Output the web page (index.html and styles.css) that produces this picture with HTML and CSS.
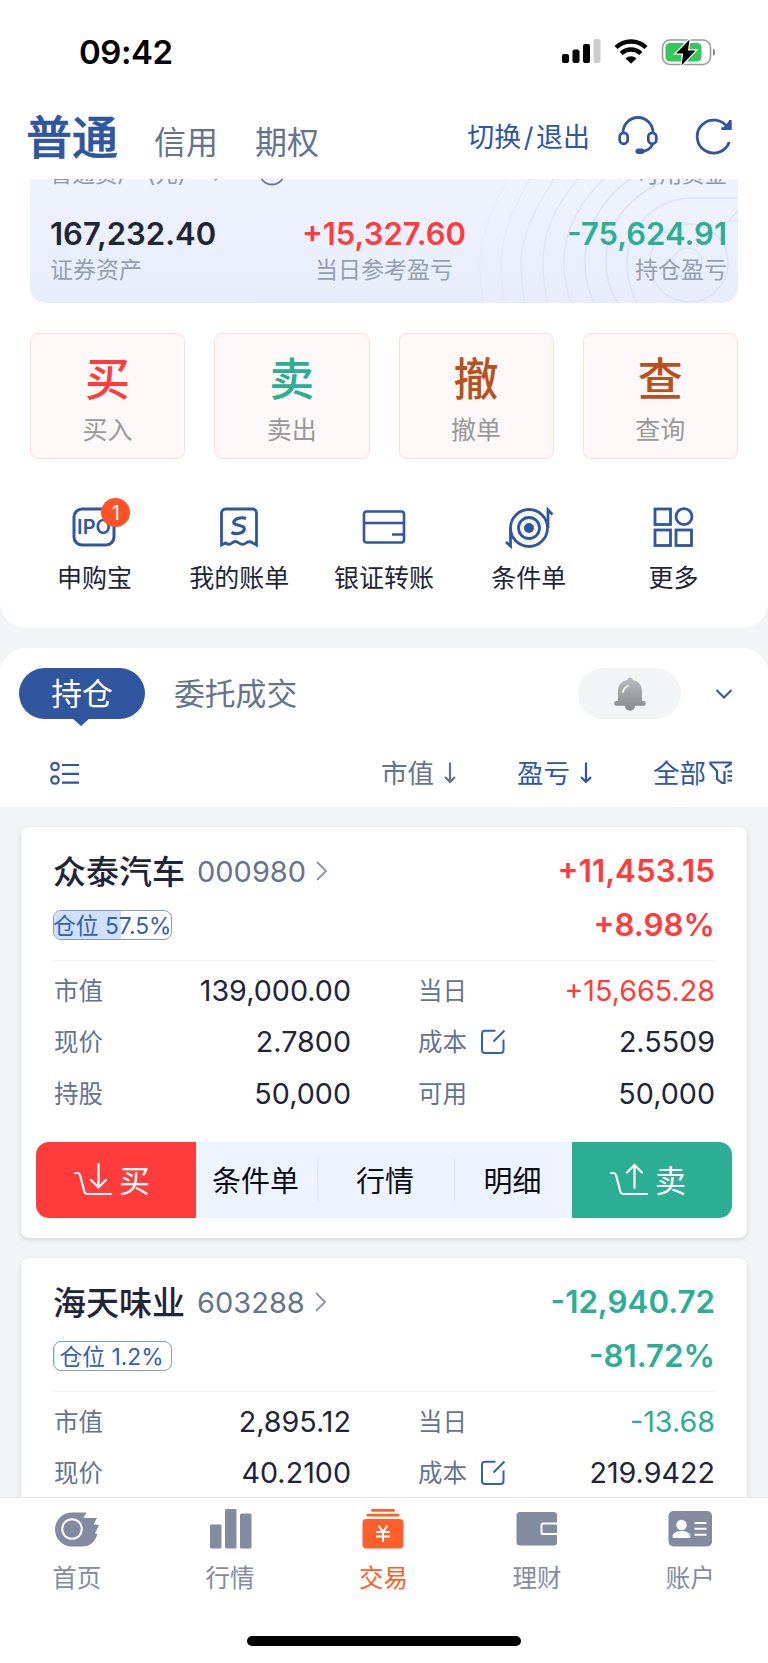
FILE: index.html
```html
<!DOCTYPE html>
<html lang="zh-CN">
<head>
    <meta charset="UTF-8">
    <meta name="viewport" content="width=device-width, initial-scale=1.0">
    <title>交易</title>
    <link rel="stylesheet" href="styles.css">
</head>
<body>
    <div class="screen">
        <div class="status-bar">
            <span class="time">09:42</span>
            <div class="status-icons">
                <svg width="40" height="26" viewBox="0 0 40 26">
                    <rect x="1" y="15" width="7" height="9" rx="2"/>
                    <rect x="11.5" y="10.500" width="7" height="13.500" rx="2"/>
                    <rect x="22" y="5" width="7" height="19" rx="2"/>
                    <rect x="32.500" y="0" width="7" height="24" rx="2" fill="#ccc"/>
                </svg>
                <svg width="34" height="26" viewBox="0 0 34 26" fill="none" stroke="#000" stroke-width="4.500">
                    <path d="M2 8.500a21.500 21.500 0 0 1 30 0"/>
                    <path d="M7.200 14.500a14 14 0 0 1 19.600 0"/>
                    <path d="M11.500 19.500a8 8 0 0 1 11 0L17 24.800z" fill="#000" stroke="none"/>
                </svg>
                <svg width="56" height="30" viewBox="0 0 56 30">
                    <rect x="1.500" y="3" width="48" height="24.500" rx="7.500" fill="#fff" stroke="#999" stroke-width="1.600"/>
                    <rect x="4.500" y="6" width="36" height="18.500" rx="4.500" fill="#34c759"/>
                    <path d="M52 11.500c3 1.500 3 6 0 7.500z" fill="#888"/>
                    <path d="M28.500 2.500L15 16.500h7.200L20.500 28.500 34.500 13.500h-7.500z" fill="#000" stroke="#fff" stroke-width="2.400" paint-order="stroke"/>
                </svg>
            </div>
        </div>

        <div class="header">
            <div class="account-tabs">
                <span class="account-tab active">普通</span>
                <span class="account-tab">信用</span>
                <span class="account-tab">期权</span>
            </div>
            <div class="header-actions">
                <span class="switch">切换<i>/</i>退出</span>
                <svg class="headset" width="40" height="40" viewBox="0 0 40 40" fill="none" stroke="#2f569f" stroke-width="2.800">
                    <path d="M5 17.500v-1a15 15 0 0 1 30 0v1"/>
                    <rect x="1.700" y="16.800" width="8" height="11" rx="4"/>
                    <rect x="30.300" y="16.800" width="8" height="11" rx="4"/>
                    <path d="M35 27c-1.500 5-6 8.500-12 8.500"/>
                    <rect x="17.500" y="32.500" width="9" height="5.500" rx="2.700" fill="#2f569f" stroke="none"/>
                </svg>
                <svg width="40" height="40" viewBox="0 0 40 40" fill="none" stroke="#2f569f" stroke-width="2.800">
                    <path d="M35.300 26a16.500 16.500 0 1 1-1.500-14"/>
                    <path d="M36.300 4v8.700h-9"/>
                    <path d="M35 5v7h-6z" fill="#2f569f" stroke="none"/>
                </svg>
            </div>
        </div>

        <div class="assets">
            <svg class="assets-pattern" width="280" height="124" viewBox="0 0 280 124" fill="none" stroke="#d9e3f8" stroke-width="1.500">
                <path d="M280 19H231a65 65 0 0 0-62 65q0 23 10 40"/>
                <path d="M202 4q-54 26-54 80q0 22 12 40"/>
                <path d="M172 0q-45 33-45 84q0 21 9 40"/>
                <path d="M146 0q-40 38-40 84q0 20 7 40" opacity=".9"/>
                <path d="M120 0q-35 40-35 84q0 20 5 40" opacity=".8"/>
                <path d="M96 0q-33 50-33 84q0 20 4 40" opacity=".7"/>
                <path d="M72 0q-29 50-29 84q0 20 3 40" opacity=".45"/>
                <path d="M50 0Q22 50 22 84q0 20 3 40" opacity=".3"/>
                <circle cx="231" cy="84" r="39"/>
                <circle cx="229" cy="84" r="15"/>
                <path d="M280 31l-9 11h9"/>
            </svg>
            <div class="assets-top">
                <span>普通资产<em>(元)</em><b>›</b></span>
                <svg width="28" height="28" viewBox="0 0 28 28"><circle cx="14" cy="14" r="12.500" fill="none" stroke="#6b7894" stroke-width="1.800"/></svg>
                <span class="push">可用资金</span>
            </div>
            <div class="assets-row">
                <div>
                    <div class="assets-value">167,232.40</div>
                    <div class="assets-label">证券资产</div>
                </div>
                <div class="center">
                    <div class="assets-value red">+15,327.60</div>
                    <div class="assets-label">当日参考盈亏</div>
                </div>
                <div class="right">
                    <div class="assets-value green">-75,624.91</div>
                    <div class="assets-label">持仓盈亏</div>
                </div>
            </div>
        </div>

        <div class="trade-grid">
            <div class="trade-card"><strong class="red">买</strong><span>买入</span></div>
            <div class="trade-card"><strong class="green">卖</strong><span>卖出</span></div>
            <div class="trade-card"><strong class="brown">撤</strong><span>撤单</span></div>
            <div class="trade-card"><strong class="brown">查</strong><span>查询</span></div>
        </div>

        <div class="shortcuts">
            <div class="shortcut">
                <div class="icon-wrap">
                    <svg width="48" height="44" viewBox="0 0 48 44">
                        <rect x="4" y="4" width="40" height="36" rx="8" fill="none" stroke="#2f569f" stroke-width="3"/>
                        <text x="24" y="29" text-anchor="middle" class="ipo">IPO</text>
                    </svg>
                    <span class="badge">1</span>
                </div>
                <span>申购宝</span>
            </div>
            <div class="shortcut">
                <svg width="48" height="44" viewBox="0 0 48 44" fill="none" stroke="#2f569f" stroke-width="2.800">
                    <path d="M6.500 40V8a4 4 0 0 1 4-4h27a4 4 0 0 1 4 4v32l-3.500-2q-4-2.500-7 0-3.500 2.800-7 0-4-3-7 0-3 2.500-6.500 0z"/>
                    <path d="M31 13.500c-5-2-12.500.5-12.200 4.200.3 3.500 11 1.600 10.500 6.300-.4 4.200-8.300 6.200-12.800 3.300" stroke-width="3.200"/>
                </svg>
                <span>我的账单</span>
            </div>
            <div class="shortcut">
                <svg width="48" height="44" viewBox="0 0 48 44" fill="none" stroke="#2f569f" stroke-width="2.600">
                    <rect x="4" y="6.500" width="40" height="31" rx="2.500"/>
                    <path d="M4 18h40M32 29.500h12"/>
                </svg>
                <span>银证转账</span>
            </div>
            <div class="shortcut">
                <svg width="48" height="44" viewBox="0 0 48 44" fill="none" stroke="#2f569f" stroke-width="2.800">
                    <circle cx="24" cy="23" r="18.500"/>
                    <circle cx="24" cy="23" r="10.500"/>
                    <circle cx="24" cy="23" r="5" fill="#2f569f" stroke="none"/>
                    <path d="M43 23V5l4.500 4.500M5.500 23v18L1 37"/>
                </svg>
                <span>条件单</span>
            </div>
            <div class="shortcut">
                <svg width="48" height="44" viewBox="0 0 48 44" fill="none" stroke="#2f569f" stroke-width="2.800">
                    <rect x="5" y="4" width="15.500" height="15.500"/>
                    <circle cx="34" cy="11.700" r="8"/>
                    <rect x="5" y="25" width="15.500" height="15.500"/>
                    <rect x="26" y="25" width="15.500" height="15.500"/>
                </svg>
                <span>更多</span>
            </div>
        </div>

        <div class="holdings-head">
            <div class="tabs">
                <span class="tab active">持仓</span>
                <span class="tab">委托成交</span>
                <div class="bell">
                    <svg width="36" height="36" viewBox="0 0 36 36">
                        <defs>
                            <linearGradient id="bellFill" x1="0" y1="0" x2="0" y2="1">
                                <stop offset="0" stop-color="#b9bbbe"/>
                                <stop offset="1" stop-color="#86888c"/>
                            </linearGradient>
                        </defs>
                        <path d="M18 1.500a2.500 2.500 0 0 1 2.500 2.600C26.500 5 30 9.500 30 15v10h1.500a2.300 2.300 0 0 1 0 4.800H23a5 5 0 0 1-10 0H4.500a2.300 2.300 0 0 1 0-4.800H6V15C6 9.500 9.500 5 15.500 4.100A2.500 2.500 0 0 1 18 1.500z" fill="url(#bellFill)"/>
                        <path d="M11 16q1-4.500 5-6" fill="none" stroke="#fffbe8" stroke-width="1.800" stroke-linecap="round"/>
                    </svg>
                </div>
                <svg class="chevron-down" width="18" height="12" viewBox="0 0 18 12" fill="none" stroke="#2f569f" stroke-width="2"><path d="M1.500 2L9 9.500 16.500 2"/></svg>
            </div>
            <div class="filters">
                <svg class="list-icon" width="30" height="26" viewBox="0 0 30 26" fill="none" stroke="#2f569f" stroke-width="2.200">
                    <circle cx="5" cy="6.500" r="3.700"/>
                    <circle cx="5" cy="20" r="3.700"/>
                    <path d="M12 5h17M12 13.800h17M12 22.600h17"/>
                </svg>
                <span class="filter muted"><span>市值</span>
                    <svg width="12" height="24" viewBox="0 0 12 24"><path d="M6 1.500v19.500M1 16l5 5 5-5"/></svg>
                </span>
                <span class="filter"><span>盈亏</span>
                    <svg width="12" height="24" viewBox="0 0 12 24"><path d="M6 1.500v19.500M1 16l5 5 5-5"/></svg>
                </span>
                <span class="filter all"><span>全部</span>
                    <svg width="24" height="24" viewBox="0 0 24 24"><path d="M16 6.500L21.800 3V1.500H1.500V3l6.500 7v8l5 4h2.500V10M18.500 10.500H23M18.500 15H23M18.500 19.500H23"/></svg>
                </span>
            </div>
        </div>

        <div class="holdings">
            <div class="stock">
                <div class="stock-title">
                    <span class="name">众泰汽车</span>
                    <span class="code">000980</span>
                    <svg width="14" height="22" viewBox="0 0 14 22"><path d="M2 2l9 9-9 9" fill="none" stroke="#8a94a8" stroke-width="1.800"/></svg>
                    <span class="profit red">+11,453.15</span>
                </div>
                <div class="stock-sub">
                    <span class="position"><i style="width: 57.5%"></i><span>仓位 57.5%</span></span>
                    <span class="profit red">+8.98%</span>
                </div>
                <div class="stats">
                    <div class="stat"><label>市值</label><span>139,000.00</span></div>
                    <div class="stat"><label>当日</label><span class="red">+15,665.28</span></div>
                    <div class="stat"><label>现价</label><span>2.7800</span></div>
                    <div class="stat"><label>成本</label>
                        <svg width="26" height="26" viewBox="0 0 26 26"><path d="M15.500 1.800H5a3 3 0 0 0-3 3V21a3 3 0 0 0 3 3h15.500a3 3 0 0 0 3-3V10.500M13.500 12.500L24.500 1.500"/></svg>
                        <span>2.5509</span>
                    </div>
                    <div class="stat"><label>持股</label><span>50,000</span></div>
                    <div class="stat"><label>可用</label><span>50,000</span></div>
                </div>
                <div class="stock-actions">
                    <div class="buy">
                        <svg width="38" height="34" viewBox="0 0 38 34"><path d="M1 10h2.500q1.800 0 2.500 2l4.500 17q.7 2 3 2H37M24.500 1v23M17 17l7.500 7.500L32 17"/></svg>买
                    </div>
                    <div class="link">条件单</div>
                    <div class="link wide">行情</div>
                    <div class="link last">明细</div>
                    <div class="sell">
                        <svg width="38" height="34" viewBox="0 0 38 34"><path d="M1 10h2.500q1.800 0 2.500 2l4.500 17q.7 2 3 2H37M24.500 25V2M17 9.500L24.500 2 32 9.500"/></svg>卖
                    </div>
                </div>
            </div>

            <div class="stock">
                <div class="stock-title">
                    <span class="name">海天味业</span>
                    <span class="code">603288</span>
                    <svg width="14" height="22" viewBox="0 0 14 22"><path d="M2 2l9 9-9 9" fill="none" stroke="#8a94a8" stroke-width="1.800"/></svg>
                    <span class="profit green">-12,940.72</span>
                </div>
                <div class="stock-sub">
                    <span class="position"><i style="width: 1.2%"></i><span>仓位 1.2%</span></span>
                    <span class="profit green">-81.72%</span>
                </div>
                <div class="stats">
                    <div class="stat"><label>市值</label><span>2,895.12</span></div>
                    <div class="stat"><label>当日</label><span class="green">-13.68</span></div>
                    <div class="stat"><label>现价</label><span>40.2100</span></div>
                    <div class="stat"><label>成本</label>
                        <svg width="26" height="26" viewBox="0 0 26 26"><path d="M15.500 1.800H5a3 3 0 0 0-3 3V21a3 3 0 0 0 3 3h15.500a3 3 0 0 0 3-3V10.500M13.500 12.500L24.500 1.500"/></svg>
                        <span>219.9422</span>
                    </div>
                </div>
            </div>
        </div>

        <div class="tab-bar">
            <div class="nav">
                <div class="nav-item">
                    <svg width="46" height="42" viewBox="0 0 46 42">
                        <path d="M18 4.500h14.500L29.500 10H43l-3.500 6.500 5.500.5-4 8.500 2.500.5C41 34 36 38.500 28 38.500H18a17 17 0 0 1 0-34z" fill="#828b9f"/>
                        <circle cx="18" cy="21" r="9.800" fill="none" stroke="#fff" stroke-width="2"/>
                    </svg>
                    <span>首页</span>
                </div>
                <div class="nav-item">
                    <svg width="46" height="42" viewBox="0 0 46 42" fill="#828b9f">
                        <rect x="3" y="16.500" width="11.500" height="24" rx="1.500"/>
                        <rect x="18" y="1" width="11.500" height="39.500" rx="1.500"/>
                        <rect x="33" y="5.500" width="11.500" height="35" rx="1.500"/>
                    </svg>
                    <span>行情</span>
                </div>
                <div class="nav-item active">
                    <svg width="46" height="42" viewBox="0 0 46 42" fill="#ff5f2a">
                        <rect x="11" y="1" width="24" height="2.800" rx="1.400"/>
                        <rect x="6.500" y="5.800" width="33" height="2.800" rx="1.400"/>
                        <rect x="2.500" y="11" width="41" height="29.500" rx="4"/>
                        <path d="M18.500 17.500l4.500 6.500 4.500-6.500M23 24v10M16 24h14M16 28.500h14" fill="none" stroke="#fff" stroke-width="2"/>
                    </svg>
                    <span>交易</span>
                </div>
                <div class="nav-item">
                    <svg width="46" height="42" viewBox="0 0 46 42">
                        <rect x="2.500" y="4" width="40.500" height="33.500" rx="3.500" fill="#828b9f"/>
                        <path d="M43.500 15.500H29a1.500 1.500 0 0 0-1.500 1.500v7.500A1.500 1.500 0 0 0 29 26h14.500" fill="none" stroke="#fff" stroke-width="2"/>
                    </svg>
                    <span>理财</span>
                </div>
                <div class="nav-item">
                    <svg width="46" height="42" viewBox="0 0 46 42">
                        <rect x="1.500" y="3" width="43.500" height="35.500" rx="5" fill="#828b9f"/>
                        <circle cx="14.500" cy="17" r="5.200" fill="#fff"/>
                        <path d="M5.500 28.500c0-7.500 18-7.500 18 0q0 1.500-2 1.500h-14q-2 0-2-1.500z" fill="#fff"/>
                        <path d="M27.500 15h12M27.500 20.800h12M27.500 26.800h12" stroke="#fff" stroke-width="2"/>
                    </svg>
                    <span>账户</span>
                </div>
            </div>
            <div class="home-indicator"></div>
        </div>
    </div>
</body>
</html>
```
FILE: styles.css
```css
* {
    box-sizing: border-box;
}
body {
    margin: 0;
    background: #f3f4f6;
    font-family: Inter, "Noto Sans CJK SC", sans-serif;
    color: #1f2536;
}
svg {
    display: block;
    flex: none;
}
i, em {
    font-style: normal;
}
.red { color: #ff3b3b; }
.green { color: #2cae94; }
.brown { color: #b8511f; }

.screen {
    width: 768px;
    height: 1663px;
    display: flex;
    flex-direction: column;
    overflow: hidden;
}
.screen > div {
    flex: none;
}

/* status bar */
.status-bar {
    height: 95px;
    padding: 8px 51px 0 79px;
    background: #fff;
    display: flex;
    align-items: center;
    justify-content: space-between;
}
.time {
    font-size: 33px;
    font-weight: 600;
    letter-spacing: -0.5px;
    color: #000;
    line-height: 40px;
}
.status-icons {
    display: flex;
    align-items: center;
    gap: 13px;
}

/* account header */
.header {
    height: 84px;
    padding: 0 34px 0 26px;
    background: #fff;
    display: flex;
    justify-content: space-between;
}
.account-tabs {
    display: flex;
    align-items: baseline;
    gap: 36px;
}
.account-tab {
    font-size: 32px;
    line-height: 84px;
    color: #66738c;
    margin-right: 1px;
}
.account-tab.active {
    font-size: 46px;
    font-weight: 500;
    color: #2f569f;
    -webkit-text-stroke: 0.6px #2f569f;
    margin-right: 0;
}
.header-actions {
    display: flex;
    align-items: center;
    height: 82px;
}
.switch {
    font-size: 27px;
    color: #2f569f;
    margin: -2px 28px 0 0;
}
.switch i {
    margin: 0 2.500px;
}
.headset {
    margin-right: 36px;
}

/* assets summary */
.assets {
    position: relative;
    height: 124px;
    padding: 0 11px 18px 20px;
    border-left: 30px solid #fff;
    border-right: 30px solid #fff;
    background: linear-gradient(#eff3fd, #e7edfc) padding-box;
    overflow: hidden;
    display: flex;
    flex-direction: column;
    justify-content: flex-end;
}
.assets::after {
    content: "";
    position: absolute;
    inset: 0;
    border-radius: 0 0 16px 16px;
    box-shadow: 0 0 0 20px #fff;
}
.assets-pattern {
    position: absolute;
    right: 0;
    top: 0;
}
.assets-top {
    display: flex;
    align-items: center;
    height: 30px;
    margin-bottom: 28px;
    font-size: 22.500px;
    color: #8d97ab;
}
.assets-top em {
    margin: 0 27px 0 7px;
}
.assets-top b {
    font-weight: 400;
    margin-right: 36px;
}
.assets-top .push {
    margin-left: auto;
}
.assets-row {
    position: relative;
    display: grid;
    grid-template-columns: 221px 1fr 230px;
}
.assets-value {
    font-size: 31px;
    font-weight: 600;
    line-height: 38px;
    padding-bottom: 2px;
}
.assets-label {
    font-size: 23px;
    line-height: 30px;
    color: #959eb0;
}
.center {
    text-align: center;
}
.right {
    text-align: right;
}

/* trade buttons */
.trade-grid {
    height: 156px;
    padding: 30px 30px 0;
    background: #fff;
    display: grid;
    grid-template-columns: repeat(4, 1fr);
    gap: 29px;
}
.trade-card {
    height: 126px;
    padding-top: 14px;
    border: 1.5px solid #ffdcdc;
    border-radius: 8px;
    background: #fff8f8;
    display: flex;
    flex-direction: column;
    align-items: center;
}
.trade-card strong {
    font-size: 45px;
    font-weight: 500;
    line-height: 64px;
}
.trade-card span {
    margin-top: 1px;
    font-size: 25px;
    line-height: 34px;
    color: #999;
}

/* shortcuts */
.shortcuts {
    height: 169px;
    padding: 46px 22px 0;
    background: #fff;
    border-radius: 0 0 26px 26px;
    display: grid;
    grid-template-columns: repeat(5, 1fr);
    font-size: 25px;
    line-height: 34px;
}
.shortcut {
    display: flex;
    flex-direction: column;
    align-items: center;
    gap: 12px;
}
.icon-wrap {
    position: relative;
}
.ipo {
    font-size: 20px;
    font-weight: 600;
    fill: #2f569f;
}
.badge {
    position: absolute;
    left: 31px;
    top: -7px;
    width: 29px;
    height: 29px;
    border-radius: 50%;
    background: #ff5226;
    color: #fff;
    font-size: 20px;
    line-height: 30px;
    text-align: center;
}

/* holdings header */
.holdings-head {
    height: 159px;
    margin-top: 20px;
    padding: 20px 18px 0;
    background: #fff;
    border-radius: 26px 26px 0 0;
}
.tabs {
    display: flex;
    align-items: center;
    height: 51px;
}
.tab {
    padding-bottom: 5px;
    font-size: 30.800px;
    color: #66738c;
}
.tab.active {
    position: relative;
    width: 126px;
    height: 51px;
    margin: 0 29px 0 1px;
    padding: 0;
    border-radius: 26px;
    background: #2f569f;
    color: #fff;
    text-align: center;
    line-height: 51px;
}
.tab.active::after {
    content: "";
    position: absolute;
    left: 53px;
    top: 50px;
    border: 9px solid transparent;
    border-top: 8px solid #2f569f;
    border-bottom: 0;
}
.bell {
    width: 103px;
    height: 51px;
    margin-left: auto;
    border-radius: 26px;
    background: #f3f4f6;
    display: flex;
    align-items: center;
    justify-content: center;
}
.chevron-down {
    margin: 0 17px 0 34px;
}
.filters {
    display: flex;
    align-items: center;
    height: 68px;
    margin-top: 20px;
    padding: 0 17px 0 32px;
}
.filter {
    display: flex;
    align-items: center;
    gap: 10px;
    margin-left: 61px;
    font-size: 26.500px;
    color: #2f569f;
}
.filter span {
    padding-bottom: 3px;
}
.filter svg {
    fill: none;
    stroke: currentColor;
    stroke-width: 2.200;
}
.filter.muted {
    margin-left: auto;
    color: #66738c;
}
.filter.all {
    gap: 3px;
}

/* stock cards */
.holdings {
    height: 690px;
    padding: 20px 21px 0;
    display: flex;
    flex-direction: column;
    gap: 20px;
    overflow: hidden;
}
.stock {
    flex: none;
    height: 411px;
    padding: 18px 32px 0;
    border-radius: 8px;
    background: #fff;
    box-shadow: 0 2px 5px rgba(0,0,0,0.12);
}
.stock-title {
    display: flex;
    align-items: center;
    height: 52px;
}
.name {
    padding-bottom: 3px;
    font-size: 33px;
    font-weight: 500;
    margin-right: 12px;
}
.code {
    font-size: 29px;
    color: #66738c;
    margin-right: 9px;
}
.profit {
    margin-left: auto;
    font-size: 31.300px;
    font-weight: 600;
}
.stock-sub {
    display: flex;
    align-items: center;
    height: 64px;
    padding-bottom: 8px;
    border-bottom: 1.5px solid #eff0f3;
}
.position {
    position: relative;
    width: 119px;
    height: 30px;
    border: 1.5px solid #7f9acb;
    border-radius: 8px;
    overflow: hidden;
    font-size: 22.800px;
    line-height: 29px;
    text-align: center;
    color: #3560ad;
    white-space: nowrap;
}
.position i {
    position: absolute;
    left: 0;
    top: 0;
    height: 100%;
    background: #cfe1ff;
}
.position span {
    position: relative;
    left: -1px;
}
.stats {
    display: grid;
    grid-template-columns: 298px 298px;
    justify-content: space-between;
    padding-top: 4px;
}
.stat {
    display: flex;
    align-items: center;
    height: 51.300px;
}
.stat label {
    padding: 0 0 2px 1px;
    font-size: 24.500px;
    color: #66738c;
}
.stat span {
    margin-left: auto;
    font-size: 28.700px;
}
.stat svg {
    margin-left: 13px;
    fill: none;
    stroke: #3560ad;
    stroke-width: 2;
}
.stock-actions {
    display: flex;
    height: 76px;
    margin: 23px -17px 0;
    border-radius: 13px;
    overflow: hidden;
    background: #edf4ff;
    color: #0c0d12;
    font-size: 29px;
}
.stock-actions > div {
    display: flex;
    align-items: center;
    justify-content: center;
    padding: 0 2px 2px 0;
}
.stock-actions .buy,
.stock-actions .sell {
    width: 160px;
    gap: 7px;
    padding-right: 8px;
    color: #fff;
    font-size: 31px;
}
.buy { background: #ff3b3b; }
.sell { background: #2cae94; }
.buy svg, .sell svg {
    margin-top: 2px;
    fill: none;
    stroke: #fff;
    stroke-width: 2.200;
    stroke-linecap: round;
}
.link {
    width: 121px;
}
.link.wide {
    width: 138px;
    background: linear-gradient(#dfe5f0, #dfe5f0) left / 1px 45px no-repeat,
        linear-gradient(#dfe5f0, #dfe5f0) right / 1px 45px no-repeat;
}
.link.last {
    width: 117px;
}

/* bottom navigation */
.tab-bar {
    height: 166px;
    border-top: 1.5px solid #e6e7ec;
    background: #fff;
}
.nav {
    display: grid;
    grid-template-columns: repeat(5, 1fr);
    height: 138px;
    padding: 10px 1px 0 0;
}
.nav-item {
    display: flex;
    flex-direction: column;
    align-items: center;
    gap: 11px;
    font-size: 24.500px;
    line-height: 34px;
    color: #828b9f;
}
.nav-item.active {
    color: #ff5f2a;
}
.home-indicator {
    width: 274px;
    height: 10px;
    margin: 0 auto;
    border-radius: 5px;
    background: #000;
}
```
